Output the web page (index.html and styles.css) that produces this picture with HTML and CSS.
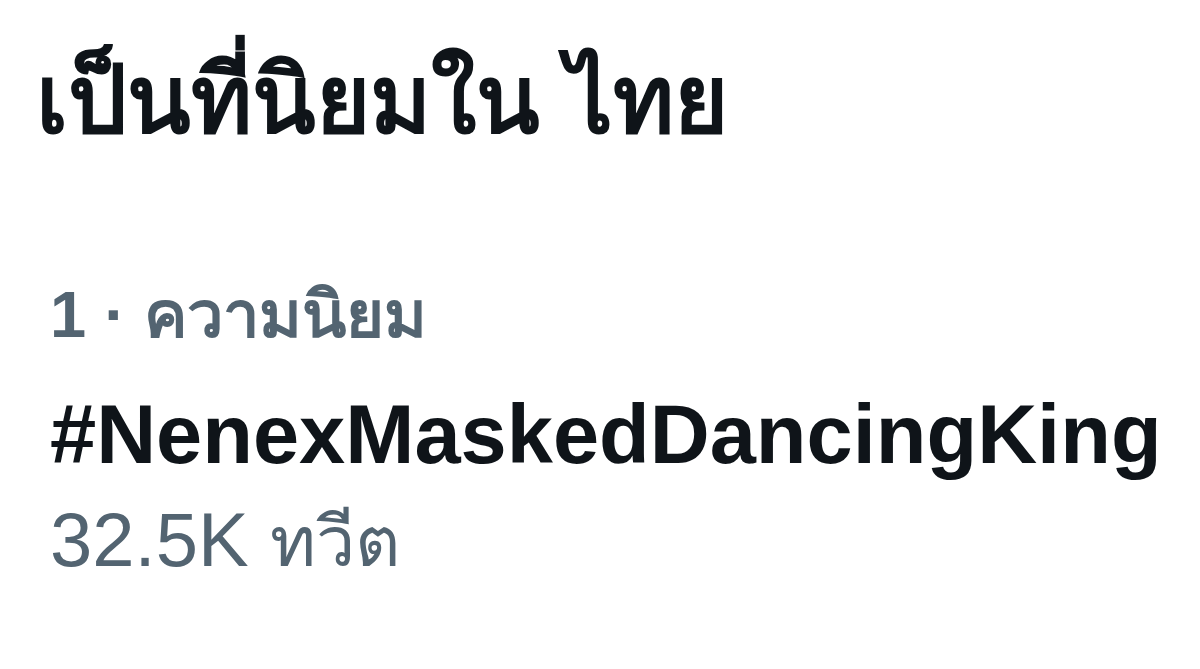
FILE: index.html
```html
<!DOCTYPE html>
<html lang="th">
<head>
<meta charset="utf-8">
<link rel="stylesheet" href="styles.css">
</head>
<body>
<main class="page">
  <h1 class="title">เป็นที่นิยมใน ไทย</h1>
  <section class="trend">
    <div class="meta">1 · ความนิยม</div>
    <div class="tag">#NenexMaskedDancingKing</div>
    <div class="count">32.5K <span class="unit">ทวีต</span></div>
  </section>
</main>
</body>
</html>
```
FILE: styles.css
```css
html, body {
  margin: 0;
  padding: 0;
  background: #ffffff;
}
.page {
  width: 1200px;
  height: 669px;
  padding: 45px 0 0 36px;
  box-sizing: border-box;
  font-family: "Liberation Sans", "Noto Sans", sans-serif;
}
.title {
  margin: 0;
  font-size: 93px;
  font-weight: 700;
  line-height: 110px;
  color: #0f1419;
}
.trend {
  display: flex;
  flex-direction: column;
  padding: 125px 0 0 14px;
}
.meta {
  font-size: 65px;
  font-weight: 700;
  color: #536471;
  line-height: 70px;
  margin-bottom: 35px;
}
.tag {
  font-size: 83px;
  font-weight: 700;
  color: #0f1419;
  line-height: 100px;
  margin-bottom: 10px;
}
.count {
  font-size: 76px;
  color: #536471;
  line-height: 90px;
}
.unit {
  font-size: 70px;
}
```
